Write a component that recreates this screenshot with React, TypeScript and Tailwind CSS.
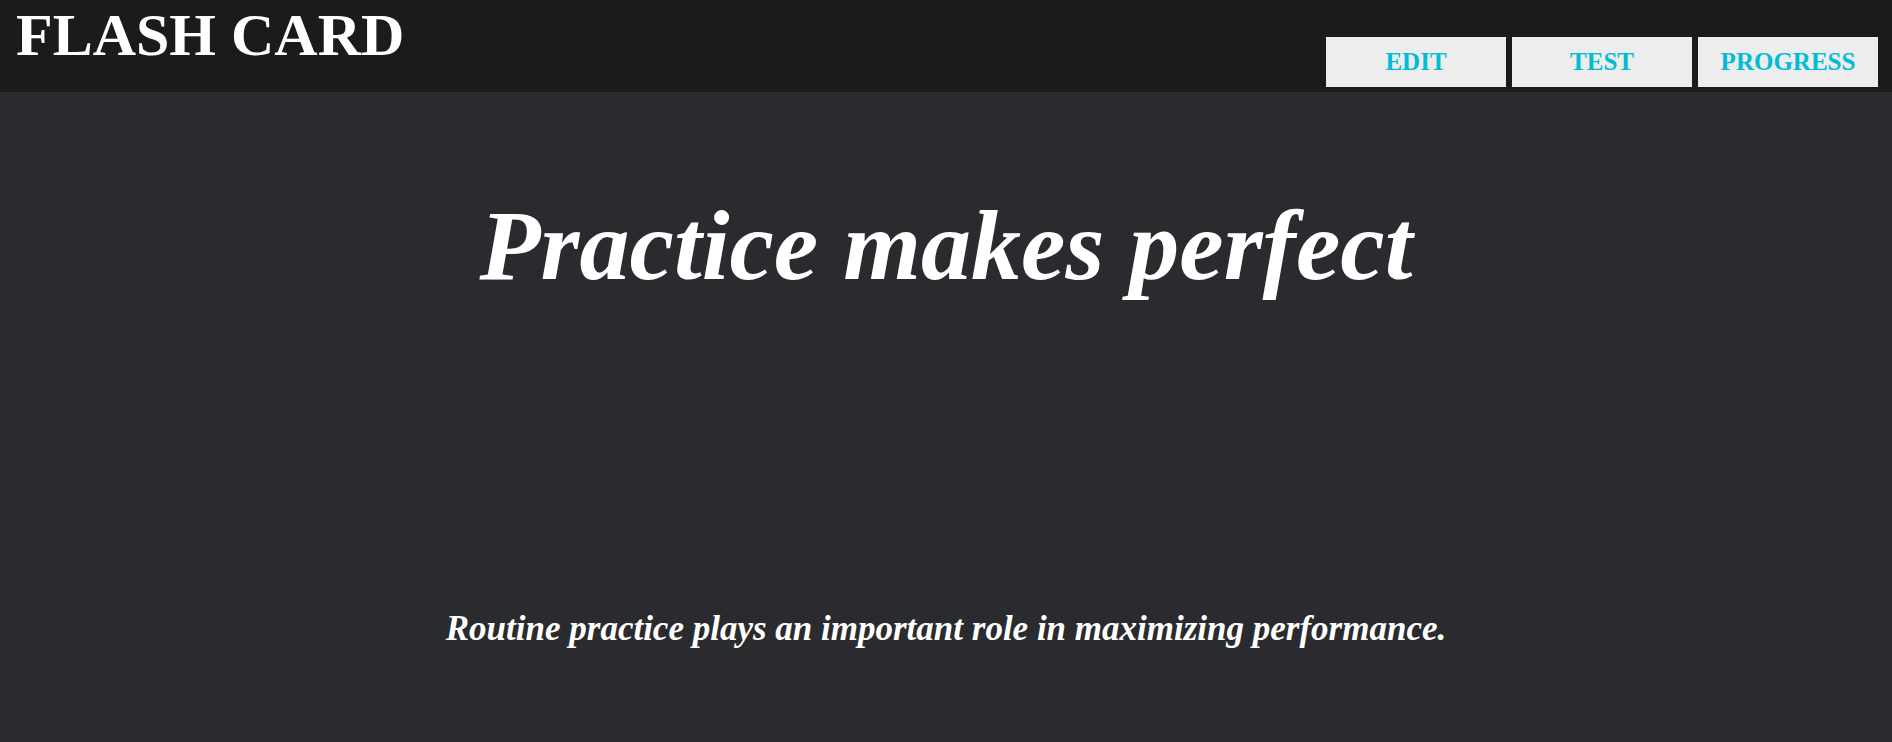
const navItems = ["EDIT", "TEST", "PROGRESS"];

export default function App() {
  return (
    <div className="min-h-screen bg-[#2a2b2e] font-['Liberation_Serif','Times_New_Roman',serif] text-white">
      <header className="flex h-[92px] items-start justify-between bg-[#1b1b1b]">
        <h1 className="pl-4 text-[60px] font-bold leading-none pt-[5px]">FLASH CARD</h1>
        <nav className="mt-[37px] mr-[14px] flex gap-[6px]">
          {navItems.map((item) => (
            <button
              key={item}
              className="h-[50px] w-[180px] bg-[#ededed] text-[25px] font-bold text-[#00bcd4]"
            >
              {item}
            </button>
          ))}
        </nav>
      </header>

      <main className="flex flex-col items-center text-center">
        <h2 className="mt-[79px] text-[100px] font-bold italic leading-normal">
          Practice makes perfect
        </h2>
        <p className="mt-[282px] text-[35px] font-bold italic leading-normal">
          Routine practice plays an important role in maximizing performance.
        </p>
      </main>
    </div>
  );
}
